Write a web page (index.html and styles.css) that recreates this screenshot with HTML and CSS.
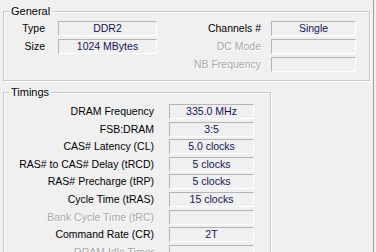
FILE: index.html
```html
<!doctype html>
<html>
  <head>
    <meta charset="utf-8" />
    <title>Memory</title>
    <link rel="stylesheet" href="styles.css">
  </head>
  <body>
    <div class="tab">
      <fieldset class="group general">
        <legend>General</legend>
        <div class="general-grid">
          <span class="label">Type</span>
          <span class="field">DDR2</span>
          <span class="label">Channels #</span>
          <span class="field">Single</span>

          <span class="label">Size</span>
          <span class="field">1024 MBytes</span>
          <span class="label disabled">DC Mode</span>
          <span class="field"></span>

          <span></span>
          <span></span>
          <span class="label disabled">NB Frequency</span>
          <span class="field"></span>
        </div>
      </fieldset>

      <fieldset class="group timings">
        <legend>Timings</legend>
        <div class="timings-grid">
          <span class="label">DRAM Frequency</span>
          <span class="field">335.0 MHz</span>
          <span class="label">FSB:DRAM</span>
          <span class="field">3:5</span>
          <span class="label">CAS# Latency (CL)</span>
          <span class="field">5.0 clocks</span>
          <span class="label">RAS# to CAS# Delay (tRCD)</span>
          <span class="field">5 clocks</span>
          <span class="label">RAS# Precharge (tRP)</span>
          <span class="field">5 clocks</span>
          <span class="label">Cycle Time (tRAS)</span>
          <span class="field">15 clocks</span>
          <span class="label disabled">Bank Cycle Time (tRC)</span>
          <span class="field"></span>
          <span class="label">Command Rate (CR)</span>
          <span class="field">2T</span>
          <span class="label disabled">DRAM Idle Timer</span>
          <span class="field"></span>
        </div>
      </fieldset>
    </div>
  </body>
</html>
```

FILE: styles.css
```css
html,
body {
  margin: 0;
  padding: 0;
  background-color: #f0f0f0;
  overflow: hidden;
}

body {
  width: 376px;
  height: 252px;
  font-family: "Liberation Sans", Arial, sans-serif;
  font-size: 10.5px;
  color: #000;
}

.tab {
  width: 374px;
  height: 252px;
  border-right: 1px solid #a0a0a0;
  padding-top: 5px;
  box-sizing: border-box;
  overflow: hidden;
}

.group {
  margin: 0 0 0 3px;
  padding: 0;
  border: 1px solid #c8c8c8;
  box-shadow: inset 1px 1px 0 #fff, 1px 1px 0 #fff;
  min-width: 0;
  box-sizing: border-box;
}

.group legend {
  margin-left: 5px;
  padding: 0 2px;
  line-height: 12px;
  font-size: 11px;
}

.general {
  width: 367px;
  padding: 4px 0 5px 0;
}

.timings {
  width: 268px;
  margin-top: 5px;
  padding-top: 6px;
  height: 200px;
}

.general-grid {
  display: grid;
  grid-template-columns: 54px 99px 114px 85px;
  grid-auto-rows: 18px;
}

.general-grid > :nth-child(4n + 1) {
  padding-right: 13px;
}

.general-grid > :nth-child(4n + 3) {
  padding-right: 10px;
}

.timings-grid {
  display: grid;
  grid-template-columns: 165px 85px;
  grid-auto-rows: 17.6px;
}

.timings-grid .label {
  padding-right: 15px;
}

.label {
  text-align: right;
  line-height: 15px;
  white-space: nowrap;
}

.label.disabled {
  color: #a8a8a8;
  text-shadow: 1px 1px 0 #fff;
}

.field {
  height: 15px;
  box-sizing: border-box;
  border: 1px solid;
  border-color: #b4b4b4 #fff #fff #b4b4b4;
  text-align: center;
  line-height: 13px;
  color: #14145a;
  white-space: nowrap;
}
```
